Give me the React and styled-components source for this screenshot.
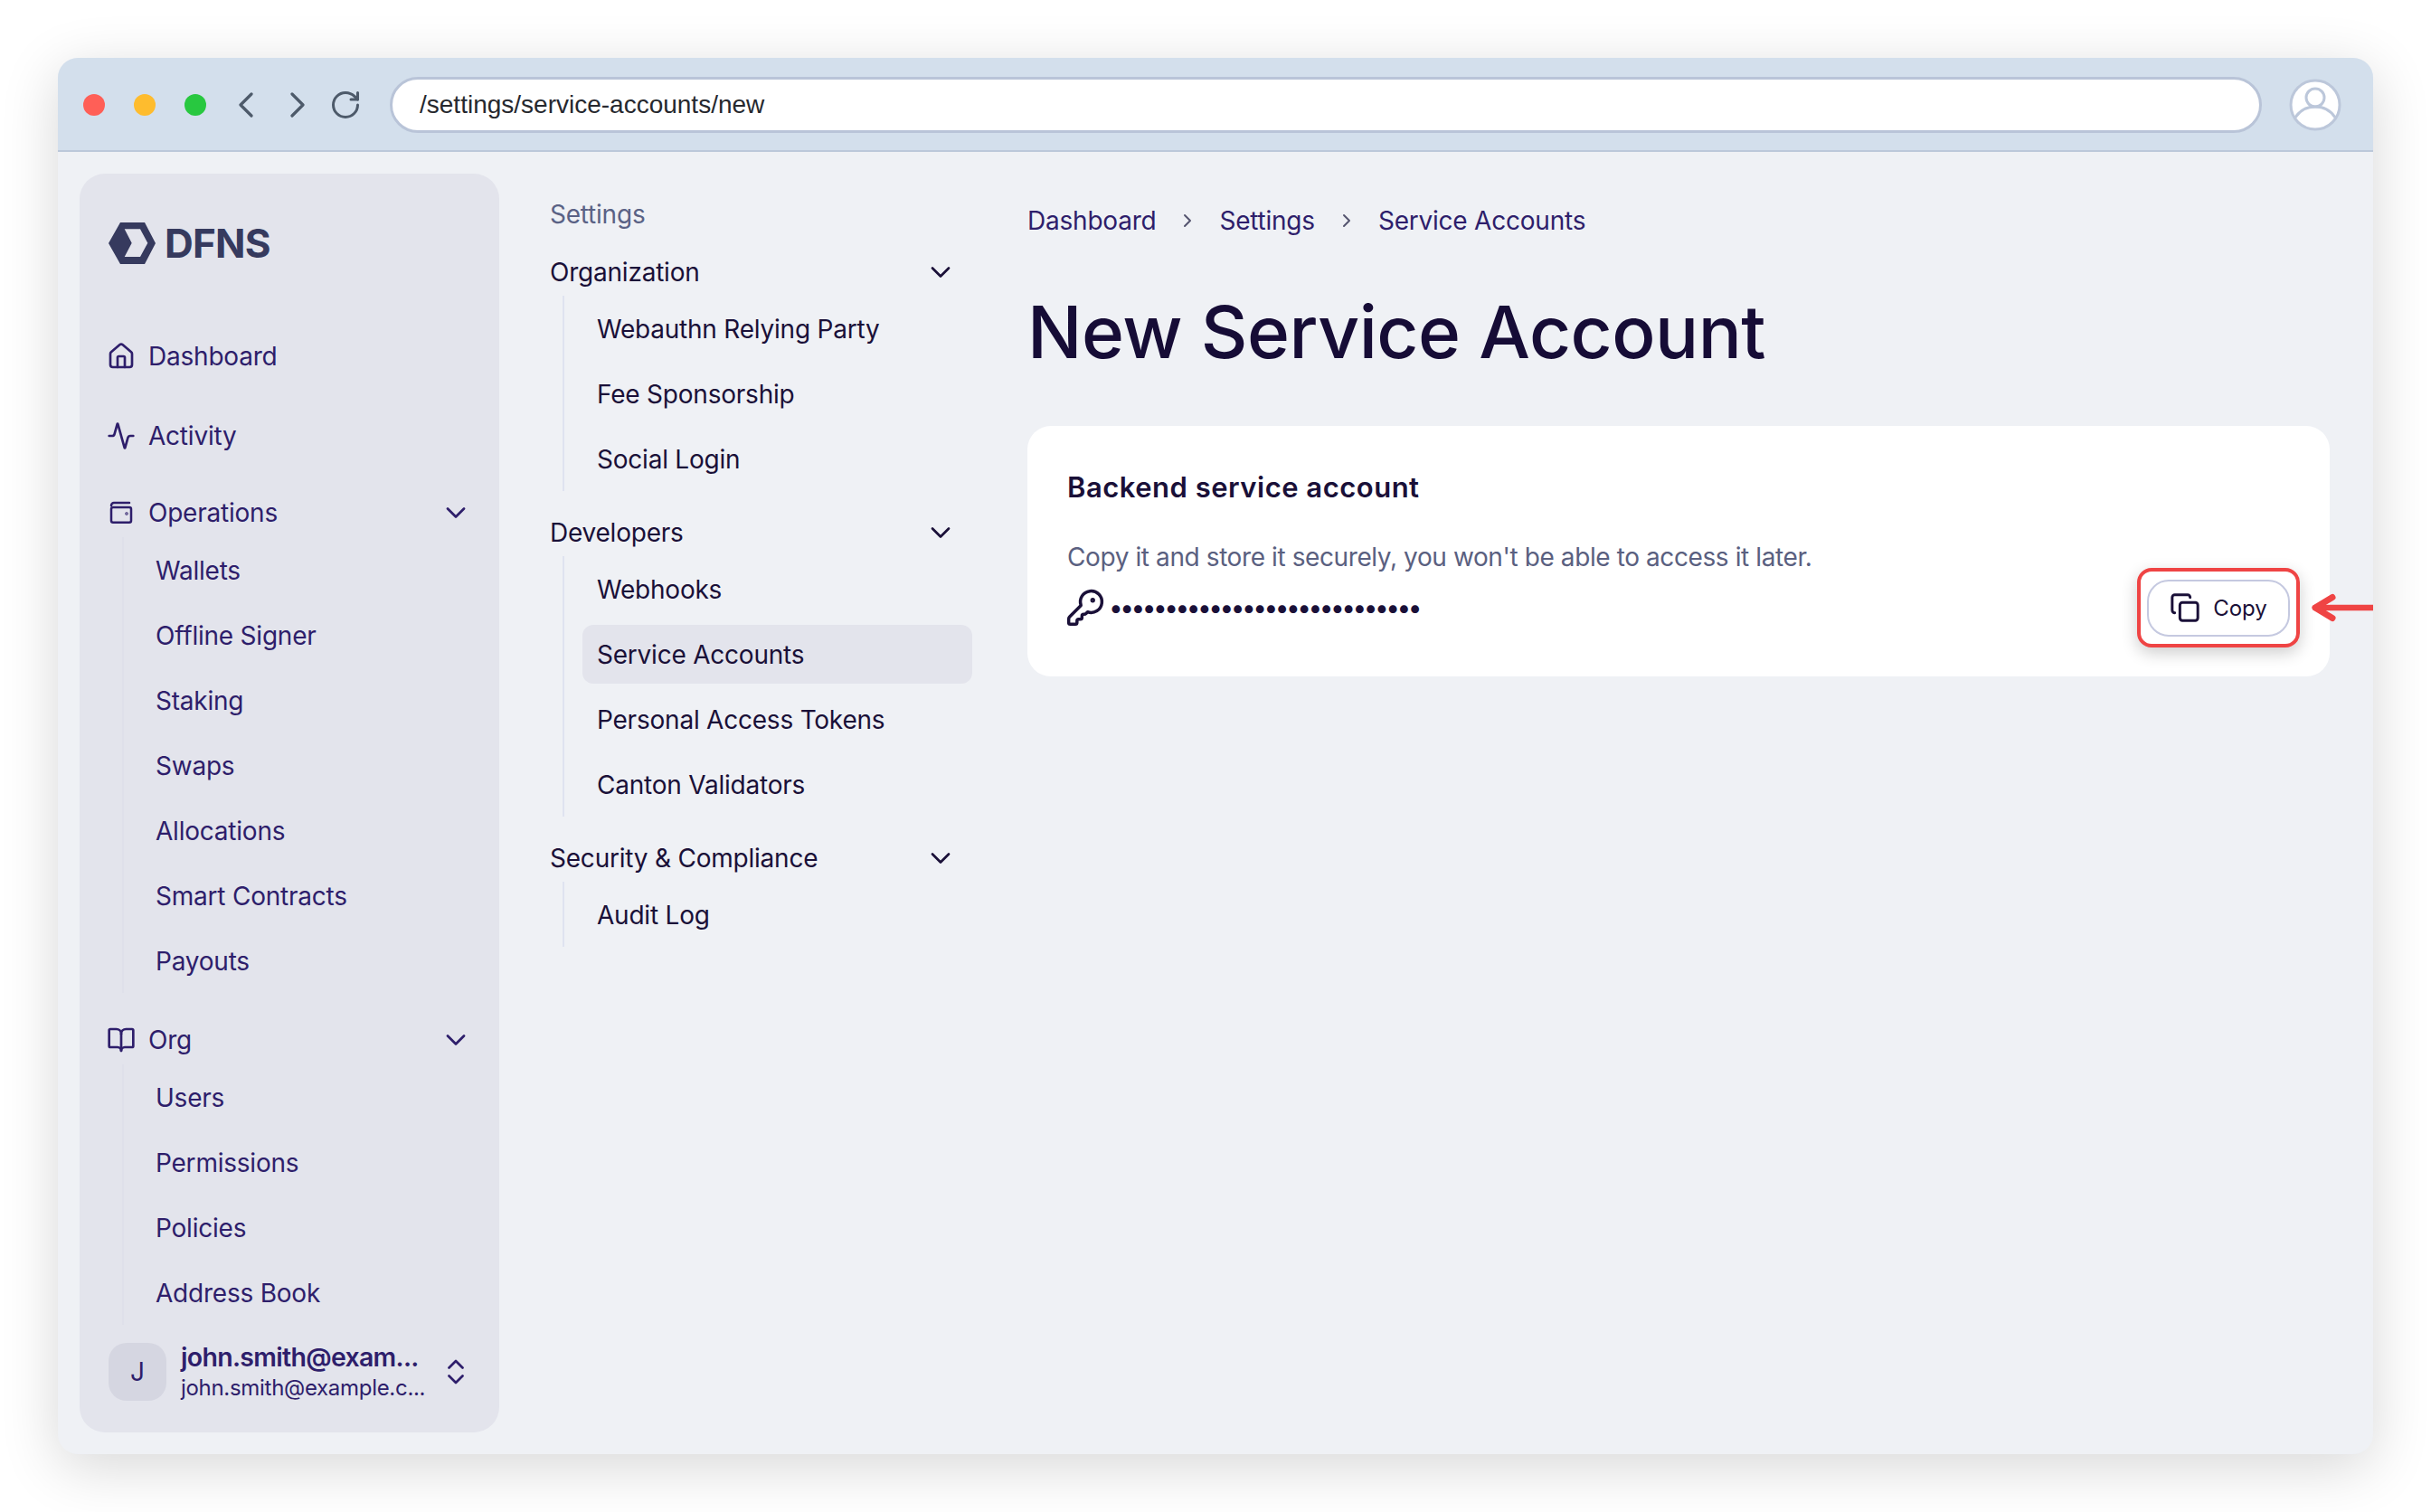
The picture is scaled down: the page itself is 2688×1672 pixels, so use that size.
import React from 'react';
import styled, { createGlobalStyle } from 'styled-components';
import { Activity, BookOpen, ChevronDown, ChevronRight, ChevronsUpDown, Copy, House, KeyRound, RotateCw } from 'lucide-react';

const GlobalStyle = createGlobalStyle`
  html, body {
    margin: 0;
    padding: 0;
    background: #ffffff;
  }
  body {
    font-family: Inter, "Liberation Sans", sans-serif;
    -webkit-font-smoothing: antialiased;
  }
  * {
    box-sizing: border-box;
  }
`;

const Page = styled.div`
  width: 2688px;
  height: 1672px;
  padding: 64px;
  overflow: hidden;
`;

const Window = styled.div`
  width: 2560px;
  height: 1544px;
  display: flex;
  flex-direction: column;
  background: #eff1f5;
  border-radius: 22px;
  overflow: hidden;
  box-shadow: 0 14px 64px rgba(0, 0, 0, 0.16);
`;

const Toolbar = styled.div`
  height: 104px;
  flex: none;
  display: flex;
  align-items: center;
  padding: 2px 35px 0 28px;
  background: #d3dfec;
  border-bottom: 2px solid #bcc8da;
`;

const Light = styled.span`
  width: 24px;
  height: 24px;
  border-radius: 50%;
  margin-right: 32px;
  flex: none;
  background: ${(p) => p.$color};
`;

const ToolIcon = styled.span`
  display: flex;
  align-items: center;
  justify-content: center;
  flex: none;
  width: ${(p) => p.$width}px;
  margin-left: ${(p) => p.$before || 0}px;
  margin-right: ${(p) => p.$gap}px;
  color: #4d5a6a;
`;

const UrlBar = styled.div`
  flex: 1;
  height: 62px;
  display: flex;
  align-items: center;
  padding-left: 30px;
  background: #ffffff;
  border: 3px solid #b9c4d8;
  border-radius: 31px;
  font-family: "Liberation Sans", Arial, sans-serif;
  font-size: 28px;
  color: #26282e;
`;

const UserCircle = styled.svg`
  margin-left: 30px;
  flex: none;
`;

const Body = styled.div`
  flex: 1;
  display: flex;
  padding: 24px 48px 24px 24px;
  min-height: 0;
  font-size: 28px;
  letter-spacing: -0.22px;
`;

const Sidebar = styled.aside`
  width: 464px;
  flex: none;
  display: flex;
  flex-direction: column;
  padding: 54px 30px 34px;
  background: #e3e4ec;
  border-radius: 28px;
  color: #2e1e6b;
`;

const Logo = styled.div`
  display: flex;
  align-items: center;
  gap: 10px;
  height: 46px;
  margin: 0 0 58px 2px;
  color: #363a5e;
  font-size: 44px;
  font-weight: 700;
  letter-spacing: -0.8px;
`;

const NavLink = styled.div`
  height: 88px;
  display: flex;
  align-items: center;
  gap: 14px;
`;

const NavGroup = styled.div`
  margin-top: ${(p) => p.$top}px;
`;

const NavHead = styled.div`
  height: 55px;
  display: flex;
  align-items: center;
  gap: 14px;
`;

const HeadLabel = styled.span`
  flex: 1;
`;

const NavList = styled.div`
  margin-left: 17px;
  padding-left: 35px;
  border-left: 2px solid #dfe0ea;
`;

const NavItem = styled.div`
  height: 72px;
  padding-top: 1px;
  display: flex;
  align-items: center;
`;

const UserRow = styled.div`
  display: flex;
  align-items: center;
  margin-top: auto;
  padding-left: 2px;
`;

const Avatar = styled.div`
  width: 64px;
  height: 64px;
  flex: none;
  display: flex;
  align-items: center;
  justify-content: center;
  border-radius: 20px;
  background: #d5d6e1;
  font-size: 28px;
`;

const UserText = styled.div`
  width: 286px;
  flex: none;
  margin-left: 16px;
`;

const UserName = styled.div`
  font-size: 28.5px;
  line-height: 36px;
  font-weight: 600;
  letter-spacing: -0.7px;
  white-space: nowrap;
`;

const UserMail = styled.div`
  font-size: 24px;
  line-height: 30px;
  padding-top: 1px;
  letter-spacing: -0.3px;
  white-space: nowrap;
`;

const SettingsNav = styled.nav`
  width: 467px;
  flex: none;
  margin-left: 56px;
  padding-top: 17px;
  color: #1a1038;
`;

const SettingsTitle = styled.div`
  height: 54px;
  padding-top: 1px;
  margin-bottom: 10px;
  display: flex;
  align-items: center;
  color: #5a6285;
`;

const SettingsGroup = styled.div`
  margin-bottom: 18px;
`;

const SettingsHead = styled.div`
  height: 54px;
  padding: 1px 17px 0 0;
  display: flex;
  align-items: center;
  justify-content: space-between;
`;

const SettingsList = styled.div`
  margin-left: 14px;
  padding-left: 21px;
  border-left: 2px solid #dfe3f0;
`;

const SettingsItem = styled.div`
  height: 72px;
  padding-top: 1px;
  display: flex;
  align-items: center;
  position: relative;
  z-index: 0;

  &::before {
    content: '';
    display: ${(p) => (p.$active ? 'block' : 'none')};
    position: absolute;
    z-index: -1;
    left: -1px;
    right: 0;
    top: 4px;
    bottom: 3px;
    border-radius: 12px;
    background: #e3e4ec;
  }
`;

const SettingsText = styled.span`
  margin-left: 15px;
`;

const Main = styled.main`
  flex: 1;
  min-width: 0;
  margin-left: 61px;
  padding-top: 31px;
`;

const Breadcrumbs = styled.div`
  height: 40px;
  padding-top: 1px;
  display: flex;
  align-items: center;
  gap: 23px;
  color: #2e1e6b;
`;

const CrumbSep = styled.span`
  display: flex;
  color: #55556f;
`;

const Title = styled.h1`
  margin: 54px 0 54px;
  height: 100px;
  line-height: 100px;
  font-size: 80px;
  font-weight: 550;
  color: #160c36;
  letter-spacing: -0.5px;
`;

const Card = styled.section`
  background: #ffffff;
  border-radius: 26px;
  padding: 48px 33px 32px 44px;
`;

const CardTitle = styled.h2`
  margin: 0 0 37px;
  font-size: 31px;
  line-height: 40px;
  font-weight: 600;
  letter-spacing: 0.5px;
  color: #1a1038;
`;

const CardRow = styled.div`
  height: 120px;
  display: flex;
  justify-content: space-between;
  align-items: flex-end;
`;

const Secret = styled.div`
  align-self: flex-start;
`;

const Hint = styled.p`
  margin: 0 0 16px;
  font-size: 28px;
  line-height: 40px;
  letter-spacing: -0.4px;
  color: #5a6080;
`;

const KeyLine = styled.div`
  height: 40px;
  display: flex;
  align-items: center;
  gap: 4px;
  margin-left: -2px;
  color: #1a1038;
`;

const Dots = styled.span`
  font-size: 28px;
  letter-spacing: -3.5px;
  white-space: nowrap;
`;

const Highlight = styled.div`
  position: relative;
  width: 180px;
  height: 88px;
  display: flex;
  align-items: center;
  justify-content: center;
  background: #ffffff;
  border: 4px solid #ef4444;
  border-radius: 16px;
  box-shadow: 0 6px 18px rgba(0, 0, 0, 0.2);
`;

const CopyButton = styled.button`
  width: 158px;
  height: 63px;
  display: flex;
  align-items: center;
  justify-content: center;
  gap: 14px;
  padding: 0;
  background: #ffffff;
  border: 2px solid #c5c9e0;
  border-radius: 24px;
  font-family: inherit;
  font-size: 24px;
  color: #1a1038;
`;

const Arrow = styled.svg`
  position: absolute;
  left: calc(100% + 15px);
  top: 50%;
  margin-top: -20px;
`;

const operations = ['Wallets', 'Offline Signer', 'Staking', 'Swaps', 'Allocations', 'Smart Contracts', 'Payouts'];
const org = ['Users', 'Permissions', 'Policies', 'Address Book'];
const settings = [
  { title: 'Organization', items: ['Webauthn Relying Party', 'Fee Sponsorship', 'Social Login'] },
  { title: 'Developers', items: ['Webhooks', 'Service Accounts', 'Personal Access Tokens', 'Canton Validators'] },
  { title: 'Security & Compliance', items: ['Audit Log'] },
];

const Chevron = () => <ChevronDown size={36} strokeWidth={1.8} />;

const WalletIcon = () => (
  <svg width="32" height="32" viewBox="0 0 32 32" fill="none" stroke="currentColor" strokeWidth="2.5" strokeLinecap="round" strokeLinejoin="round">
    <path d="M25 5H8a3 3 0 0 0-3 3" />
    <rect x="5" y="10" width="22" height="16.7" rx="2" />
    <circle cx="22" cy="17" r="0.5" />
  </svg>
);

const DfnsMark = () => (
  <svg width="52" height="46" viewBox="0 0 52 46">
    <path
      fill="currentColor"
      fillRule="evenodd"
      d="M0 23 13 0h27l12 23-12 23H13ZM17.7 7.3 25.7 22.7 17.7 38H35L43.3 22.7 35 7.3Z"
    />
  </svg>
);

const App = () => (
  <Page>
    <GlobalStyle />
    <Window>
      <Toolbar>
        <Light $color="#ff5f57" />
        <Light $color="#febc2e" />
        <Light $color="#28c840" />
        <ToolIcon $width={16} $before={4} $gap={41}>
          <svg width="16" height="28" viewBox="0 0 16 28" fill="none" stroke="currentColor" strokeWidth="3.2" strokeLinecap="round" strokeLinejoin="round">
            <path d="M14 2 2 14l12 12" />
          </svg>
        </ToolIcon>
        <ToolIcon $width={16} $gap={27}>
          <svg width="16" height="28" viewBox="0 0 16 28" fill="none" stroke="currentColor" strokeWidth="3.2" strokeLinecap="round" strokeLinejoin="round">
            <path d="m2 2 12 12L2 26" />
          </svg>
        </ToolIcon>
        <ToolIcon $width={36} $gap={31}>
          <RotateCw size={36} strokeWidth={2} />
        </ToolIcon>
        <UrlBar>/settings/service-accounts/new</UrlBar>
        <UserCircle width="58" height="58" viewBox="0 0 58 58" fill="#ffffff" stroke="#bcc7da" strokeWidth="3">
          <circle cx="29" cy="29" r="27" />
          <circle cx="29" cy="21" r="10" />
          <path d="M7 43C12 35 20 31 29 31s17 4 22 12" fill="none" />
        </UserCircle>
      </Toolbar>
      <Body>
        <Sidebar>
          <Logo>
            <DfnsMark />
            <span>DFNS</span>
          </Logo>
          <NavLink>
            <House size={32} strokeWidth={2} />
            Dashboard
          </NavLink>
          <NavLink>
            <Activity size={32} strokeWidth={2} />
            Activity
          </NavLink>
          <NavGroup $top={13}>
            <NavHead>
              <WalletIcon />
              <HeadLabel>Operations</HeadLabel>
              <Chevron />
            </NavHead>
            <NavList>
              {operations.map((item) => (
                <NavItem key={item}>{item}</NavItem>
              ))}
            </NavList>
          </NavGroup>
          <NavGroup $top={24}>
            <NavHead>
              <BookOpen size={32} strokeWidth={2} />
              <HeadLabel>Org</HeadLabel>
              <Chevron />
            </NavHead>
            <NavList>
              {org.map((item) => (
                <NavItem key={item}>{item}</NavItem>
              ))}
            </NavList>
          </NavGroup>
          <UserRow>
            <Avatar>J</Avatar>
            <UserText>
              <UserName>john.smith@exam...</UserName>
              <UserMail>john.smith@example.c...</UserMail>
            </UserText>
            <ChevronsUpDown size={36} strokeWidth={1.8} />
          </UserRow>
        </Sidebar>
        <SettingsNav>
          <SettingsTitle>Settings</SettingsTitle>
          {settings.map((group) => (
            <SettingsGroup key={group.title}>
              <SettingsHead>
                {group.title}
                <Chevron />
              </SettingsHead>
              <SettingsList>
                {group.items.map((item) => (
                  <SettingsItem key={item} $active={item === 'Service Accounts'}>
                    <SettingsText>{item}</SettingsText>
                  </SettingsItem>
                ))}
              </SettingsList>
            </SettingsGroup>
          ))}
        </SettingsNav>
        <Main>
          <Breadcrumbs>
            <span>Dashboard</span>
            <CrumbSep><ChevronRight size={24} strokeWidth={2} /></CrumbSep>
            <span>Settings</span>
            <CrumbSep><ChevronRight size={24} strokeWidth={2} /></CrumbSep>
            <span>Service Accounts</span>
          </Breadcrumbs>
          <Title>New Service Account</Title>
          <Card>
            <CardTitle>Backend service account</CardTitle>
            <CardRow>
              <Secret>
                <Hint>Copy it and store it securely, you won't be able to access it later.</Hint>
                <KeyLine>
                  <KeyRound size={44} strokeWidth={1.9} />
                  <Dots>{'•'.repeat(28)}</Dots>
                </KeyLine>
              </Secret>
              <Highlight>
                <CopyButton>
                  <Copy size={34} strokeWidth={2.1} />
                  Copy
                </CopyButton>
                <Arrow width="90" height="40" viewBox="0 0 90 40" fill="none" stroke="#ef4444" strokeLinecap="round" strokeLinejoin="round">
                  <path d="M6 20h84" strokeWidth="6.5" />
                  <path d="M25 8.5 6 20l19 11.5" strokeWidth="7" />
                </Arrow>
              </Highlight>
            </CardRow>
          </Card>
        </Main>
      </Body>
    </Window>
  </Page>
);

export default App;
